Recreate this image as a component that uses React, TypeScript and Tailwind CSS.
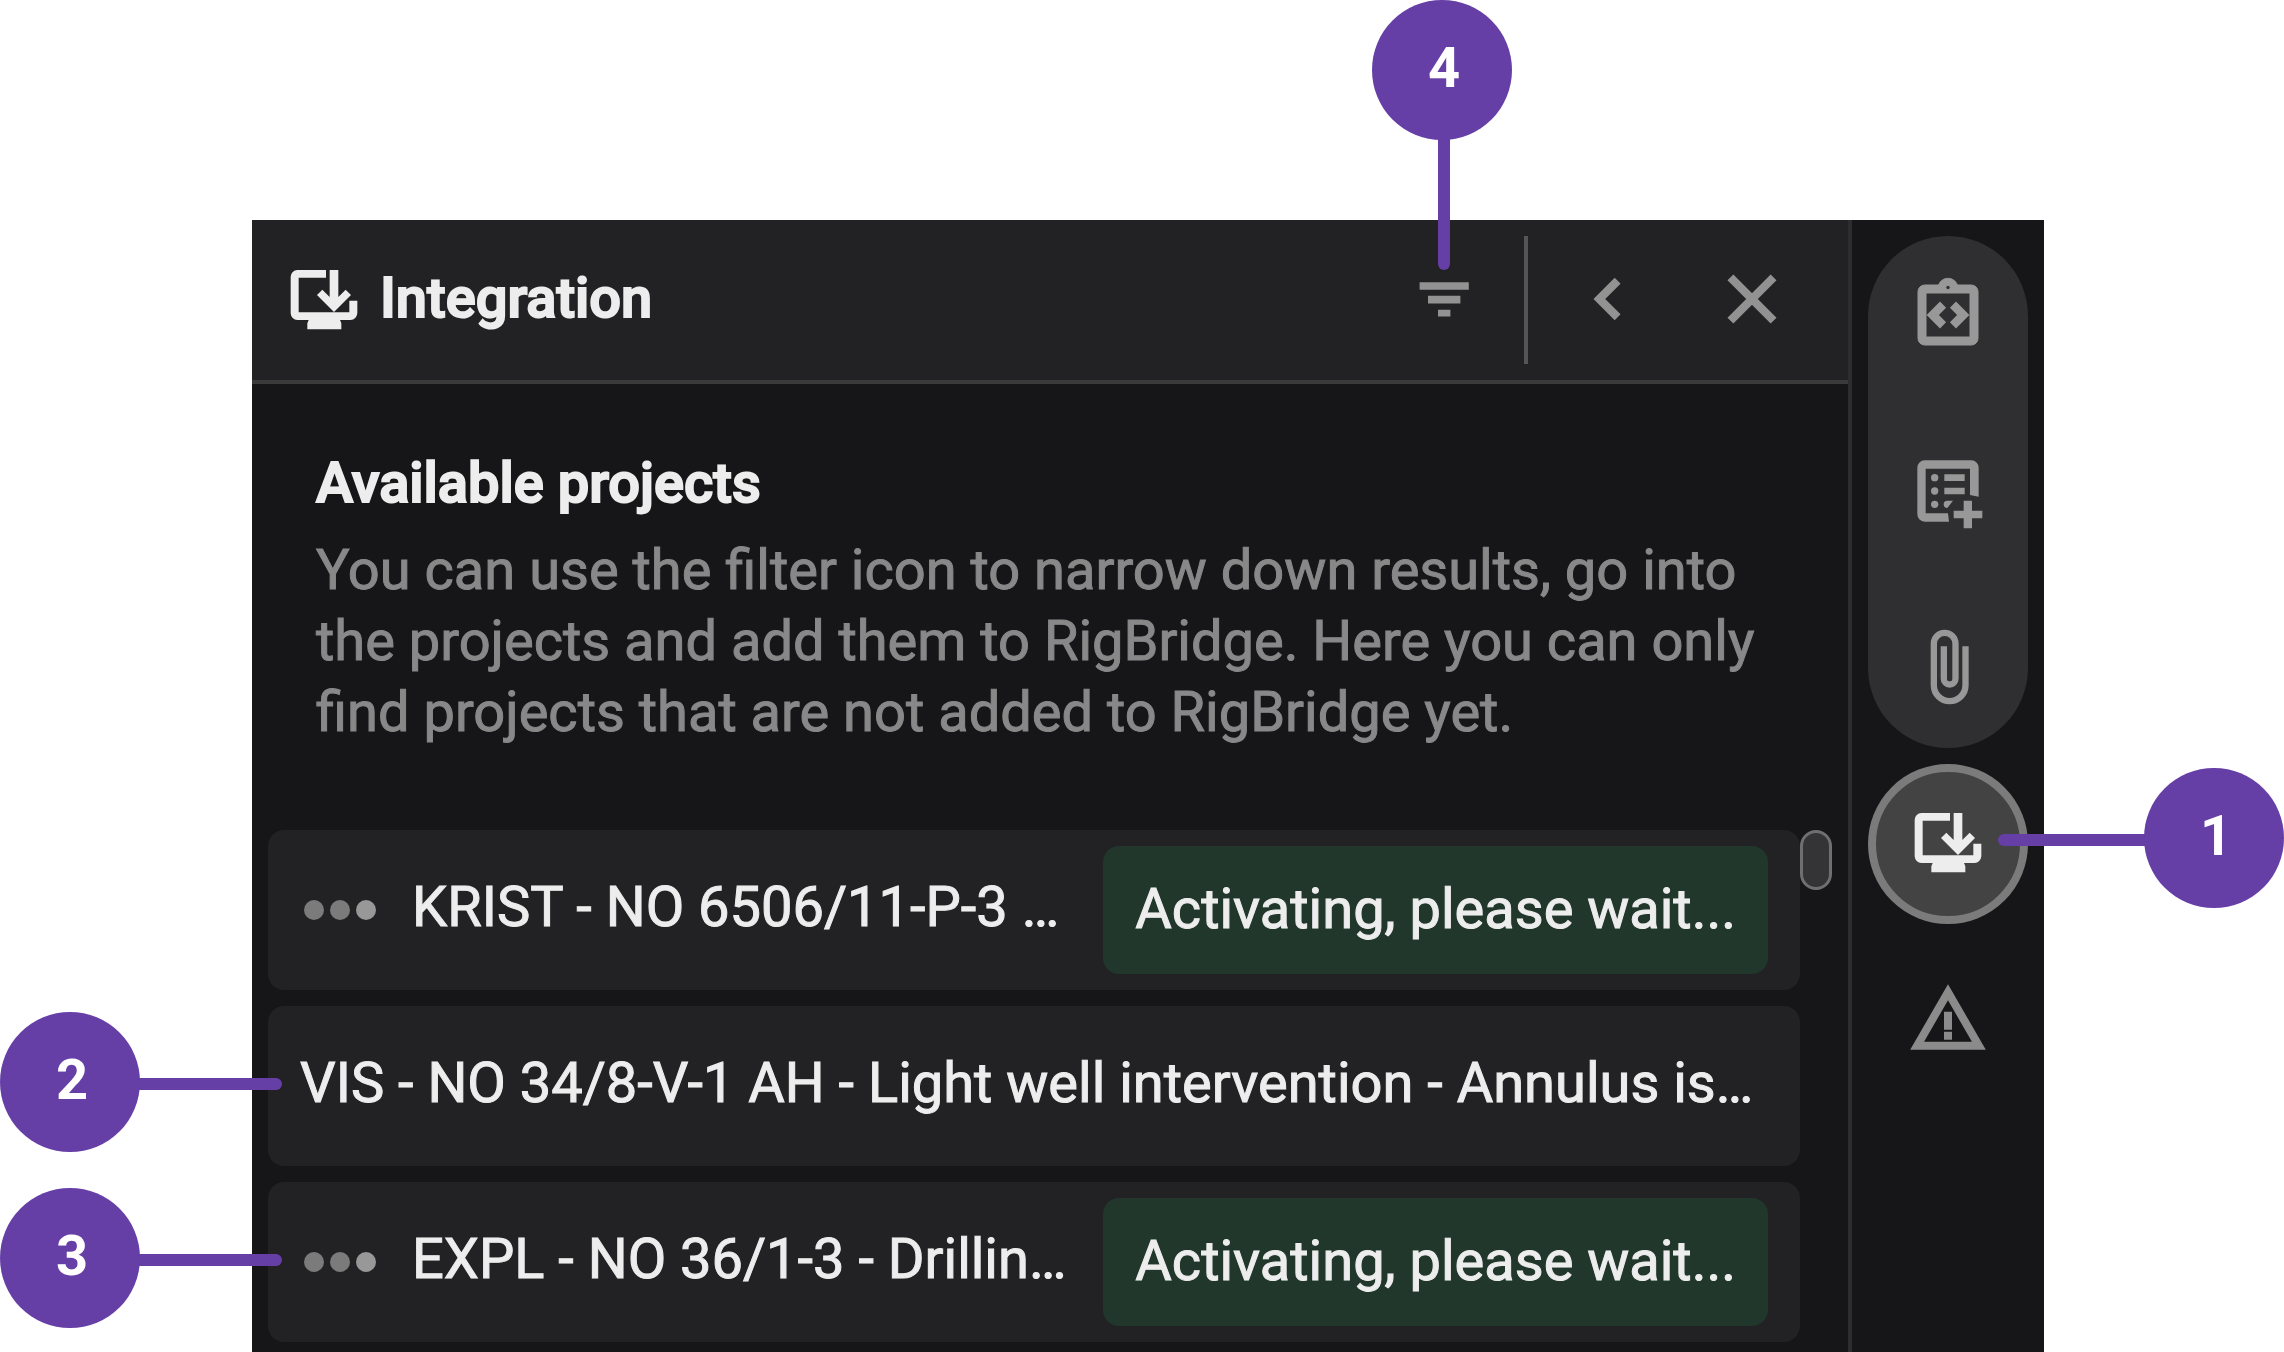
import React from "react";

type IconProps = { className?: string };

function DesktopDownload({ className = "" }: IconProps) {
  return (
    <svg viewBox="0 0 24 24" fill="currentColor" aria-hidden="true" className={`size-20 shrink-0 ${className}`}>
      <path d="M22 12.2V16a2.2 2.2 0 0 1-2 2h-3.2l.4 1v1.8H7V19l.4-1H4a2.1 2.1 0 0 1-2-2V5a2.1 2.1 0 0 1 2-2h8.6v2.3H4.4v10.4h15.2v-3.5z" />
      <path d="M15 15.600 9.900 10.500l1.600-1.600 2.200 2.200V3h2.600v8.100l2.200-2.200 1.600 1.600z" />
    </svg>
  );
}

function ClipboardCode() {
  return (
    <svg viewBox="0 0 24 24" fill="currentColor" stroke="currentColor" strokeWidth="0.3" aria-hidden="true" className="size-20">
      <path fillRule="evenodd" d="M5 3h4.180C9.600 1.840 10.700 1 12 1s2.400.840 2.820 2H19a2 2 0 0 1 2 2v14a2 2 0 0 1-2 2H5a2 2 0 0 1-2-2V5a2 2 0 0 1 2-2zm.400 2.400v13.200h13.200V5.400zM12 3.100a.650.650 0 1 0 0 1.300.650.650 0 0 0 0-1.300z" />
      <path strokeWidth="0.6" d="M11 14.170 8.830 12 11 9.830 9.600 8.400 6 12l3.600 3.600zM14.400 15.600 18 12l-3.600-3.600L13 9.830 15.170 12 13 14.170z" />
    </svg>
  );
}

function ListAdd() {
  return (
    <svg viewBox="0 0 24 24" fill="currentColor" aria-hidden="true" className="size-20">
      <path d="M12.300 21.200H5a2.200 2.200 0 0 1-2.200-2.200V5a2.200 2.200 0 0 1 2.200-2.200h14A2.200 2.200 0 0 1 21.200 5v8.700l-2.600-.5V5.300H5.300v13.400h6.700z" />
      <circle cx="8" cy="8" r="1.1" />
      <circle cx="8" cy="12" r="1.1" />
      <circle cx="8" cy="16" r="1.1" />
      <path d="M10.900 7h6.100v2h-6.100zM10.900 11h6.100v2h-6.100zM11.800 17.100a1.100 1.100 0 1 1 0-2.200H13.500z" />
      <path d="M16.700 14.900h2.500v3h3.100v2.300h-3.100v3h-2.500v-3h-3v-2.300h3z" />
    </svg>
  );
}

function Paperclip() {
  return (
    <svg viewBox="0 0 24 24" fill="currentColor" stroke="currentColor" strokeWidth="0.4" aria-hidden="true" className="size-20">
      <path d="M16.500 6v11.500c0 2.210-1.790 4-4 4s-4-1.790-4-4V5c0-1.380 1.120-2.500 2.500-2.500s2.500 1.120 2.500 2.500v10.500c0 .550-.450 1-1 1s-1-.450-1-1V6H10v9.500c0 1.380 1.120 2.500 2.500 2.500s2.500-1.120 2.500-2.500V5c0-2.210-1.790-4-4-4S7 2.790 7 5v12.500c0 3.040 2.460 5.500 5.500 5.500s5.500-2.460 5.500-5.500V6h-1.500z" />
    </svg>
  );
}

function Warning() {
  return (
    <svg viewBox="0 0 24 24" fill="currentColor" stroke="currentColor" strokeWidth="0.4" aria-hidden="true" className="size-20">
      <path d="M12 5.990 19.530 19H4.470zM12 2 1 21h22zm1 14h-2v2h2zm0-6h-2v5h2z" fillRule="evenodd" />
    </svg>
  );
}

function Filter() {
  return (
    <svg viewBox="0 0 20 20" fill="currentColor" aria-hidden="true" className="size-20">
      <path d="M3.900 5.800h12.300v1.900H3.900zM6 9.200h8.100v1.900H6zM8.500 12.700h3.100v1.700H8.500z" />
    </svg>
  );
}

function Chevron() {
  return (
    <svg viewBox="0 0 24 24" fill="currentColor" stroke="currentColor" strokeWidth="0.5" aria-hidden="true" className="size-20">
      <path d="M15.410 7.410 14 6l-6 6 6 6 1.410-1.410L10.830 12z" />
    </svg>
  );
}

function Close() {
  return (
    <svg viewBox="0 0 24 24" fill="currentColor" stroke="currentColor" strokeWidth="0.5" aria-hidden="true" className="size-20">
      <path d="M19 6.410 17.590 5 12 10.590 6.410 5 5 6.410 10.590 12 5 17.590 6.410 19 12 13.410 17.590 19 19 17.590 13.410 12z" />
    </svg>
  );
}

function Marker({ label, side }: { label: string; side: "left" | "right" | "top" }) {
  const place = {
    left: "right-full top-1/2 -mr-[14px] -mt-[2px] -translate-y-1/2 flex-row",
    right: "left-full top-1/2 -ml-[22px] -mt-1 -translate-y-1/2 flex-row-reverse",
    top: "bottom-full left-1/2 -mb-[11px] -translate-x-1/2 flex-col",
  }[side];
  const badge = { left: "mb-1", right: "mb-1", top: "mr-1" }[side];
  const line = {
    left: "-ml-2 h-3 w-[150px] rounded-r-full",
    right: "-mr-2 h-3 w-[154px] rounded-l-full",
    top: "-mt-2 h-[138px] w-3 rounded-b-full",
  }[side];
  return (
    <span className={`pointer-events-none absolute z-10 flex items-center ${place}`}>
      <span
        className={`flex size-[140px] shrink-0 items-center justify-center rounded-full bg-[#663fa6] pb-1 pl-1 font-bold text-white [-webkit-text-stroke:0px] ${badge}`}
      >
        {label}
      </span>
      <span className={`shrink-0 bg-[#663fa6] ${line}`} />
    </span>
  );
}

type Project = { name: string; activating: boolean; marker?: string };

const projects: Project[] = [
  { name: "KRIST - NO 6506/11-P-3 …", activating: true },
  { name: "VIS - NO 34/8-V-1 AH - Light well intervention - Annulus is…", activating: false, marker: "2" },
  { name: "EXPL - NO 36/1-3 - Drillin…", activating: true, marker: "3" },
];

function ProjectRow({ name, activating, marker }: Project) {
  return (
    <li className="relative flex h-40 items-center rounded-2xl bg-[#222224] px-8">
      {marker && <Marker label={marker} side="left" />}
      {activating && (
        <span className="mr-9 flex shrink-0 gap-[6px] pl-1" aria-hidden="true">
          <i className="size-5 rounded-full bg-[#7b7b7b]" />
          <i className="size-5 rounded-full bg-[#7b7b7b]" />
          <i className="size-5 rounded-full bg-[#989898]" />
        </span>
      )}
      <button type="button" className="min-w-0 flex-1 truncate pb-[6px] text-left">
        {name}
      </button>
      {activating && (
        <span className="ml-8 flex h-32 shrink-0 items-center rounded-2xl bg-[#21372b] px-8 pb-[2px]">
          Activating, please wait...
        </span>
      )}
    </li>
  );
}

export default function App() {
  return (
    <div className="h-screen overflow-hidden bg-white pl-[252px] pr-60 pt-[220px] font-[Roboto,sans-serif] text-[56px] leading-[71px] text-[#ededed] [-webkit-text-stroke:1px]">
      <div className="flex h-full bg-[#161618]">
        <main className="flex min-w-0 flex-1 flex-col">
          <header className="flex h-[164px] shrink-0 items-center border-b-4 border-[#3a3a3b] bg-[#222224] pl-8 pr-[56px]">
            <DesktopDownload />
            <h1 className="ml-4 flex-1 pb-1 font-medium [-webkit-text-stroke:2px]">Integration</h1>
            <div className="flex items-center text-[#929292]">
              <button type="button" aria-label="Filter" className="relative pb-[2px]">
                <Filter />
                <Marker label="4" side="top" />
              </button>
              <span className="ml-10 h-32 w-1 bg-[#555556]" />
              <button type="button" aria-label="Back" className="ml-10 pb-[2px]">
                <Chevron />
              </button>
              <button type="button" aria-label="Close" className="ml-16 pb-[2px]">
                <Close />
              </button>
            </div>
          </header>
          <section className="px-16 pt-16">
            <h2 className="font-medium [-webkit-text-stroke:2px]">Available projects</h2>
            <p className="mt-4 text-[#888889]">
              You can use the filter icon to narrow down results, go into the projects and add them to RigBridge. Here
              you can only find projects that are not added to RigBridge yet.
            </p>
          </section>
          <div className="mt-[82px] flex px-4">
            <ul className="flex min-w-0 flex-1 flex-col gap-4">
              {projects.map((p) => (
                <ProjectRow key={p.name} {...p} />
              ))}
            </ul>
            <span className="h-[60px] w-8 shrink-0 rounded-full border-[3px] border-[#6f6f70] bg-[#343436]" />
          </div>
        </main>
        <nav className="flex w-[196px] shrink-0 flex-col items-center gap-4 border-l-4 border-[#2d2d2f] pt-4 text-[#989898]">
          <div className="flex flex-col gap-4 rounded-full bg-[#2f2f31]">
            <button type="button" aria-label="Instructions" className="flex size-40 items-center justify-center pb-[2px]">
              <ClipboardCode />
            </button>
            <button type="button" aria-label="Add list" className="flex size-40 items-center justify-center pb-[2px]">
              <ListAdd />
            </button>
            <button type="button" aria-label="Attachments" className="flex size-40 items-center justify-center pb-[2px]">
              <Paperclip />
            </button>
          </div>
          <button
            type="button"
            aria-label="Integration"
            className="relative flex size-40 items-center justify-center rounded-full border-8 border-[#7b7b7b] bg-[#434343] pb-[2px] text-[#ededed]"
          >
            <DesktopDownload />
            <Marker label="1" side="right" />
          </button>
          <button
            type="button"
            aria-label="Warnings"
            className="flex size-40 items-center justify-center pb-[2px] text-[#8b8b8b]"
          >
            <Warning />
          </button>
        </nav>
      </div>
    </div>
  );
}
